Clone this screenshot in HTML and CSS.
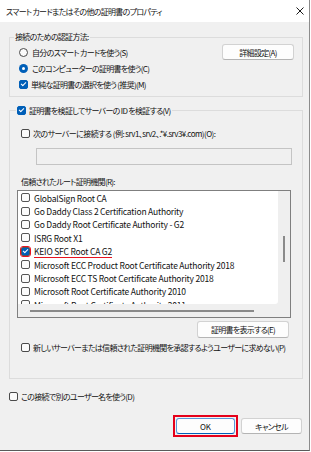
FILE: index.html
```html
<!DOCTYPE html>
<html lang="ja">

<head>
    <meta charset="UTF-8">
    <meta name="viewport" content="width=device-width, initial-scale=1.0">
    <title>スマート カードまたはその他の証明書のプロパティ</title>
    <link rel="stylesheet" href="styles.css">
</head>

<body>
    <div class="window">
        <div class="titlebar">
            <span class="title">スマート カードまたはその他の証明書のプロパティ</span>
            <svg class="close" width="8" height="8" viewBox="0 0 8 8">
                <path d="M0.5 0.5L7.5 7.5M7.5 0.5L0.5 7.5" stroke="#1a1a1a" stroke-width="1" fill="none" />
            </svg>
        </div>

        <div class="content">
            <fieldset class="group auth">
                <legend>接続のための認証方法:</legend>
                <div class="row first">
                    <label class="opt"><span class="radio"></span>自分のスマート カードを使う(S)</label>
                    <button class="btn adv">詳細設定(A)</button>
                </div>
                <div class="row">
                    <label class="opt"><span class="radio on"></span>このコンピューターの証明書を使う(C)</label>
                </div>
                <div class="row last">
                    <label class="opt"><span class="check on"></span>単純な証明書の選択を使う (推奨)(M)</label>
                </div>
            </fieldset>

            <fieldset class="group verify">
                <legend><label class="opt"><span class="check on"></span>証明書を検証してサーバーの ID を検証する(V)</label></legend>

                <label class="opt indent server"><span class="check"></span>次のサーバーに接続する (例: srv1、srv2、.*¥.srv3¥.com)(O):</label>
                <div class="textbox"></div>

                <div class="caption">信頼されたルート証明機関(R):</div>
                <div class="listbox">
                    <div class="items">
                        <div class="item"><span class="check"></span>GlobalSign Root CA</div>
                        <div class="item"><span class="check"></span>Go Daddy Class 2 Certification Authority</div>
                        <div class="item"><span class="check"></span>Go Daddy Root Certificate Authority - G2</div>
                        <div class="item"><span class="check"></span>ISRG Root X1</div>
                        <div class="item marked"><span class="check on"></span><span class="name">KEIO SFC Root CA G2</span></div>
                        <div class="item"><span class="check"></span>Microsoft ECC Product Root Certificate Authority 2018</div>
                        <div class="item"><span class="check"></span>Microsoft ECC TS Root Certificate Authority 2018</div>
                        <div class="item"><span class="check"></span>Microsoft Root Certificate Authority 2010</div>
                        <div class="item"><span class="check"></span>Microsoft Root Certificate Authority 2011</div>
                    </div>
                    <div class="vscroll"><div class="thumb"></div></div>
                    <div class="hscroll"><div class="thumb"></div></div>
                    <div class="corner"></div>
                </div>

                <div class="viewrow">
                    <button class="btn view">証明書を表示する(E)</button>
                </div>

                <label class="opt indent noprompt"><span class="check"></span>新しいサーバーまたは信頼された証明機関を承認するようユーザーに求めない(P)</label>
            </fieldset>

            <label class="opt altuser"><span class="check"></span>この接続で別のユーザー名を使う(D)</label>

            <div class="actions">
                <span class="mark"><button class="btn ok">OK</button></span>
                <button class="btn cancel">キャンセル</button>
            </div>
        </div>
    </div>
</body>

</html>
```

FILE: styles.css
```css
* {
    box-sizing: border-box;
}

body {
    margin: 0;
    background-color: #ffffff;
    font-family: "Noto Sans CJK JP", "Noto Sans", sans-serif;
    font-size: 8px;
    font-feature-settings: "palt";
    letter-spacing: -0.7px;
    color: #111111;
}

.window {
    width: 310px;
    height: 451px;
    background-color: #f0f0f0;
    border-right: 1px solid #8c8c8c;
    border-bottom: 1px solid #5a5a5a;
    display: flex;
    flex-direction: column;
}

.titlebar {
    height: 22px;
    flex: none;
    background-color: #ffffff;
    display: flex;
    align-items: center;
    justify-content: space-between;
    padding: 0 5px 0 6px;
}

.content {
    padding: 9px 6px 0 9px;
    display: flex;
    flex-direction: column;
}

/* group boxes */
.group {
    margin: 0;
    min-width: 0;
    border: 1px solid #dcdcdc;
}

.group legend {
    line-height: 12px;
    padding: 0 1px;
}

.auth {
    padding: 1px 9px 3px 9px;
}

.auth legend {
    margin-left: -5px;
}

.row {
    height: 16px;
    display: flex;
    align-items: center;
    justify-content: space-between;
}

.row.last {
    height: 17px;
}

.verify {
    margin-top: 7px;
    padding: 9px 11px 24px 7px;
}

.verify legend {
    line-height: 13px;
    margin-left: -1px;
}

/* checkbox / radio rows */
.opt {
    display: flex;
    align-items: center;
    white-space: nowrap;
}

.radio,
.check {
    flex: none;
    width: 9px;
    height: 9px;
    margin-right: 3px;
    border: 1px solid #4a4a4a;
    background-color: #fbfbfb;
    position: relative;
}

.radio {
    border-radius: 50%;
    margin-right: 4px;
}

.check {
    border-radius: 2px;
}

.radio.on {
    border: none;
    background-color: #005fb8;
}

.radio.on::after {
    content: "";
    position: absolute;
    left: 3px;
    top: 3px;
    width: 3px;
    height: 3px;
    border-radius: 50%;
    background-color: #ffffff;
}

.check.on {
    border-color: #005fb8;
    background-color: #005fb8;
}

.check.on::after {
    content: "";
    position: absolute;
    left: 2px;
    top: 0px;
    width: 2px;
    height: 4px;
    border-right: 1px solid #ffffff;
    border-bottom: 1px solid #ffffff;
    transform: rotate(45deg);
}

.indent {
    margin-left: 4px;
    height: 14px;
}

.server {
    letter-spacing: -0.55px;
}

.textbox {
    height: 17px;
    margin: 8px -1px 0 19px;
    border: 1px solid #c4c4c4;
    background-color: #f0f0f0;
}

.caption {
    margin: 11px 0 0 4px;
    line-height: 12px;
}

/* list of root authorities */
.listbox {
    margin-top: 2px;
    height: 128px;
    border: 1px solid #7f7f7f;
    background-color: #efefef;
    display: grid;
    grid-template-columns: 260px 1fr;
    grid-template-rows: 113px 1fr;
}

.items {
    background-color: #ffffff;
    overflow: hidden;
    border-bottom-right-radius: 3px;
    font-size: 8.5px;
    letter-spacing: -0.2px;
}

.item {
    height: 13.4px;
    display: flex;
    align-items: center;
    padding-left: 3px;
    white-space: nowrap;
}

.item .check {
    margin-right: 4px;
    border-color: #555555;
}

.item.marked .check {
    outline: 1.5px solid #e8131f;
    outline-offset: 0.5px;
    border-radius: 2px;
}

.item .name {
    text-decoration: underline;
    text-decoration-color: #e8131f;
    text-decoration-thickness: 1px;
    text-underline-offset: 2px;
}

.vscroll {
    padding: 45px 0 0 5px;
}

.vscroll .thumb {
    width: 2px;
    height: 26px;
    background-color: #8a8a8a;
}

.hscroll {
    padding: 6px 0 0 12px;
}

.hscroll .thumb {
    width: 224px;
    height: 2px;
    background-color: #8a8a8a;
}

/* buttons */
.btn {
    font-family: inherit;
    font-size: 8px;
    font-feature-settings: "palt";
    letter-spacing: -0.7px;
    color: #111111;
    background-color: #fdfdfd;
    border: 1px solid #d2d2d2;
    border-bottom-color: #b4b4b4;
    border-radius: 3px;
    padding: 0;
    height: 16px;
}

.adv {
    width: 72px;
    margin-right: -1px;
}

.viewrow {
    display: flex;
    justify-content: flex-end;
    margin-top: 3px;
}

.view {
    width: 92px;
    height: 17px;
    margin-right: 2px;
}

.noprompt {
    margin-top: 2px;
}

.altuser {
    margin-top: 10px;
    height: 14px;
}

.actions {
    margin-top: 12px;
    display: flex;
    align-items: center;
    justify-content: flex-end;
    gap: 3px;
    padding-right: 1px;
}

.mark {
    display: flex;
    padding: 1px;
    border: 2px solid #e5001a;
}

.ok {
    width: 59px;
    border-color: #5a98d8;
    border-bottom-color: #005fb8;
    letter-spacing: 0;
}

.cancel {
    width: 61px;
}
```
